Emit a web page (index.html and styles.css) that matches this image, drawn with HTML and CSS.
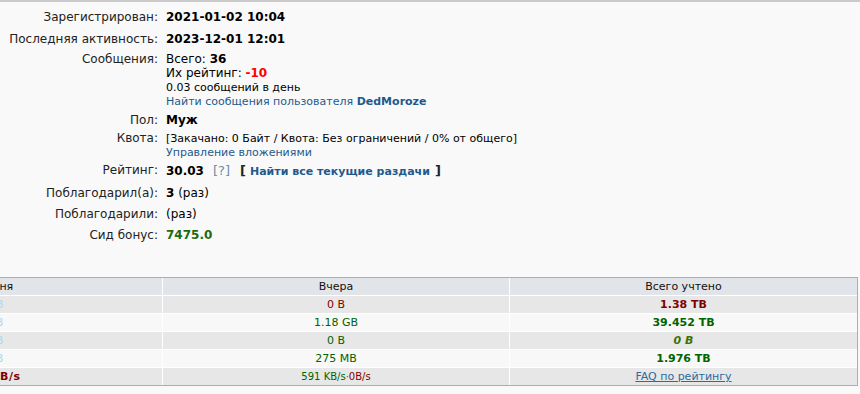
FILE: index.html
```html
<!DOCTYPE html>
<html lang="ru">
<head>
<meta charset="utf-8">
<title>Профиль</title>
<link rel="stylesheet" href="styles.css">
</head>
<body>
<div class="page">
  <div class="info info-a">
    <div class="row"><div class="lbl">Зарегистрирован:</div><div class="val"><b>2021-01-02 10:04</b></div></div>
    <div class="row"><div class="lbl">Последняя активность:</div><div class="val"><b>2023-12-01 12:01</b></div></div>
    <div class="row row-posts">
      <div class="lbl">Сообщения:</div>
      <div class="val">
        <div class="line">Всего: <b>36</b></div>
        <div class="line l2">Их рейтинг: <b class="neg">-10</b></div>
        <div class="line small">0.03 сообщений в день</div>
        <div class="line small"><a class="link" href="#">Найти сообщения пользователя <b>DedMoroze</b></a></div>
      </div>
    </div>
    <div class="row"><div class="lbl">Пол:</div><div class="val"><b>Муж</b></div></div>
  </div>

  <div class="info info-b">
    <div class="row row-quota">
      <div class="lbl">Квота:</div>
      <div class="val small">
        <div class="line q1">[Закачано: 0 Байт / Квота: Без ограничений / 0% от общего]</div>
        <div class="line q2"><a class="link" href="#">Управление вложениями</a></div>
      </div>
    </div>
    <div class="row row-rating"><div class="lbl">Рейтинг:</div><div class="val rating"><b>30.03</b><span class="help">[?]</span><b class="br">[</b><a class="link find" href="#"><b>Найти все текущие раздачи</b></a><b class="br">]</b></div></div>
    <div class="row"><div class="lbl">Поблагодарил(а):</div><div class="val"><b>3</b> (раз)</div></div>
    <div class="row"><div class="lbl">Поблагодарили:</div><div class="val">(раз)</div></div>
    <div class="row"><div class="lbl">Сид бонус:</div><div class="val"><b class="bonus">7475.0</b></div></div>
  </div>

  <div class="stats-wrap">
    <table class="stats">
      <thead>
        <tr><th>Сегодня</th><th>Вчера</th><th>Всего учтено</th></tr>
      </thead>
      <tbody>
        <tr><td class="cy">0.1 B</td><td class="red">0 B</td><td><b class="red">1.38 TB</b></td></tr>
        <tr><td class="cy">0.1 B</td><td class="grn">1.18 GB</td><td><b class="grn">39.452 TB</b></td></tr>
        <tr><td class="cy">0.1 B</td><td class="grn">0 B</td><td><b class="olive"><i>0 B</i></b></td></tr>
        <tr><td class="cy">0.1 B</td><td class="grn">275 MB</td><td><b class="grn">1.976 TB</b></td></tr>
        <tr><td><b class="red spd1">25.9 KB/s</b></td><td class="speed"><span class="grn">591 KB/s</span><span class="dot">·</span><span class="red">0B/s</span></td><td><a class="link faq" href="#">FAQ по рейтингу</a></td></tr>
      </tbody>
    </table>
  </div>
</div>
</body>
</html>
```

FILE: styles.css
```css
html, body {
  margin: 0;
  padding: 0;
}
body {
  background: #f9f9f9;
  font-family: "DejaVu Sans", Verdana, sans-serif;
  font-size: 12px;
  color: #000;
  overflow: hidden;
}
.page {
  border-top: 2px solid #cbcbcb;
  width: 860px;
  height: 392px;
  overflow: hidden;
}
.info {
  display: flex;
  flex-direction: column;
}
.info-a {
  padding-top: 4px;
}
.row {
  display: flex;
  padding: 4px 0;
  line-height: 14px;
}
.info-b .row {
  padding: 3px 0;
  line-height: 15px;
}
.lbl {
  color: #222;
  text-align: right;
  flex: none;
  width: 158px;
}
.val {
  flex: 1;
  padding-left: 8px;
}
.row-posts {
  padding: 2px 0 0;
}
.line {
  line-height: 14px;
}
.line.l2 {
  line-height: 15px;
}
.info-b .row-quota {
  padding: 0;
}
.row-quota .q1 {
  line-height: 15px;
}
.row-quota .q2 {
  line-height: 14px;
}
.info-b .row-rating {
  padding: 3px 0 4px;
}
.small {
  font-size: 11px;
}
.neg {
  color: #f00;
}
.link {
  color: #1f5a8c;
  text-decoration: none;
}
.rating {
  display: flex;
  align-items: baseline;
}
.help {
  color: #6f8ba5;
  font-size: 13px;
  margin: 0 10px 0 9px;
}
.br {
  color: #222;
  font-size: 13px;
}
.find {
  font-size: 11px;
  margin: 0 5px 0 4px;
}
.bonus {
  color: #1d6b0e;
}

.stats-wrap {
  margin-top: 31px;
  margin-left: -185px;
}
.stats {
  border-collapse: separate;
  border-spacing: 0;
  border: 1px solid #a9aeb4;
  width: 1043px;
  table-layout: fixed;
  font-size: 11px;
}
.stats th, .stats td {
  height: 17px;
  padding: 0;
  line-height: 17px;
  text-align: center;
  border-right: 1px solid #fff;
  border-bottom: 1px solid #fff;
  white-space: nowrap;
}
.stats th:last-child, .stats td:last-child {
  border-right: 0;
}
.stats tbody tr:last-child td {
  border-bottom: 0;
}
.stats th {
  background: #e1e4e8;
  font-weight: normal;
  color: #111;
}
.stats tbody tr:nth-child(odd) td {
  background: #e7e7e7;
}
.stats tbody tr:nth-child(even) td {
  background: #f8f8f8;
}
.cy {
  color: #a3dcef;
}
.red {
  color: #800000;
}
.grn {
  color: #006400;
}
.olive {
  color: #3f7000;
}
.spd1 {
  letter-spacing: 0.5px;
}
.speed {
  font-size: 10px;
}
.dot {
  color: #555;
}
.faq {
  text-decoration: underline;
  color: #2a6aa0;
}
```
